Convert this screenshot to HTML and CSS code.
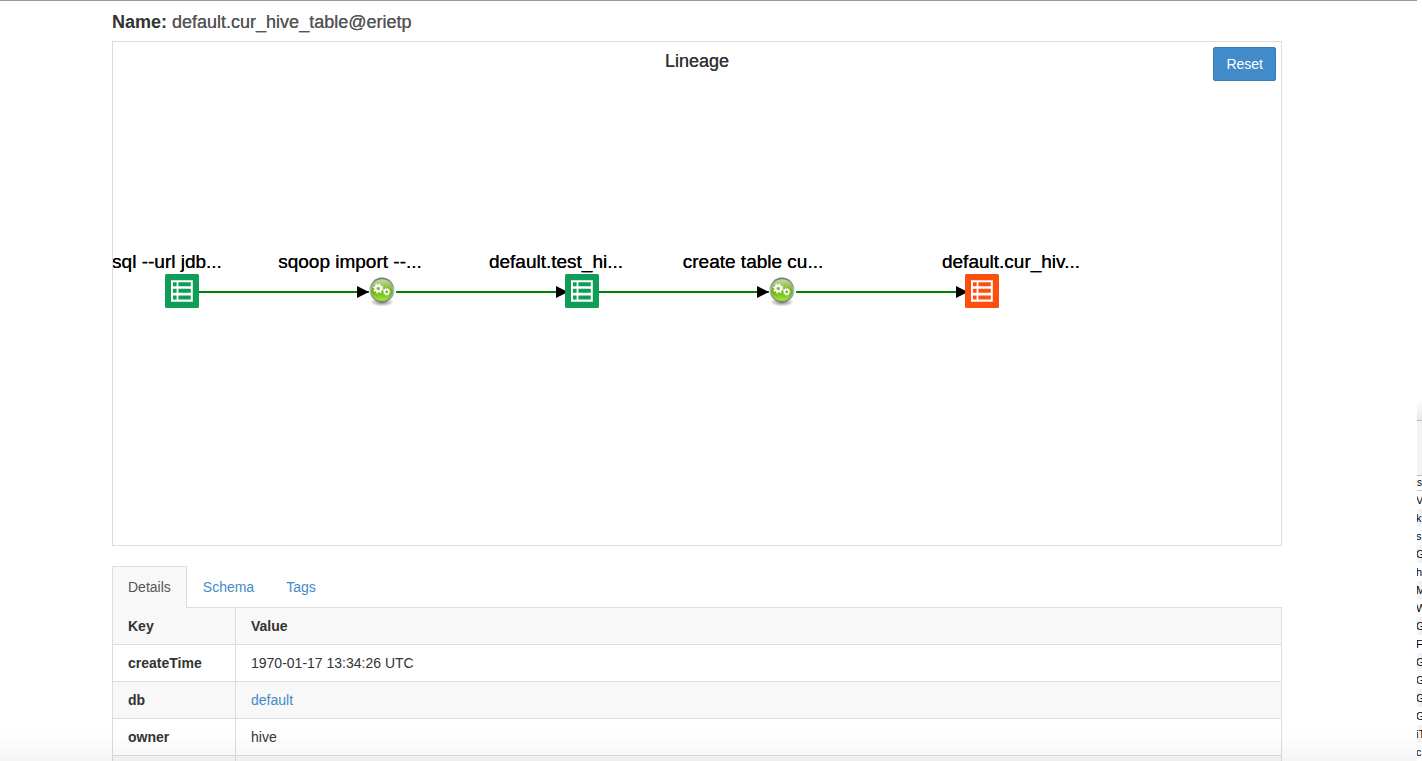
FILE: index.html
```html
<!DOCTYPE html>
<html lang="en">
<head>
<meta charset="utf-8">
<title>default.cur_hive_table@erietp</title>
<link rel="stylesheet" href="styles.css">
</head>
<body>
<div class="desktop">
  <div class="browser">
    <main class="container">
      <h1 class="entity"><b>Name:</b> <span>default.cur_hive_table@erietp</span></h1>

      <section class="lineage">
        <h2 class="lineage-title">Lineage</h2>
        <button type="button" class="reset">Reset</button>
        <svg class="graph" role="img" aria-label="Lineage graph">
          <defs>
            <marker id="arrow" viewBox="0 0 12 12" refX="12" refY="6" markerWidth="12" markerHeight="12" markerUnits="userSpaceOnUse" orient="auto"><path d="M0 0 12 6 0 12Z"/></marker>
            <linearGradient id="rim" x1="0" y1="0" x2="0" y2="1"><stop offset="0" stop-color="#74746f"/><stop offset=".5" stop-color="#b9bcb6"/><stop offset="1" stop-color="#777d70"/></linearGradient>
            <linearGradient id="ball" x1="0" y1="0" x2="0" y2="1"><stop offset="0" stop-color="#c5df9c"/><stop offset=".45" stop-color="#80b93c"/><stop offset=".55" stop-color="#62ab16"/><stop offset="1" stop-color="#a1ec35"/></linearGradient>
            <radialGradient id="shade"><stop offset="0" stop-color="#777"/><stop offset="1" stop-color="#777" stop-opacity="0"/></radialGradient>
            <g id="table">
              <rect width="34" height="34" rx="1.5"/>
              <path fill="#fff" fill-rule="evenodd" d="M6 6.3h21.8v21.4H6zM8 8.3v3.9h3.6V8.3zM13.4 8.3v3.9h12.4V8.3zM8 14.8v3.9h3.6v-3.9zM13.4 14.8v3.9h12.4v-3.9zM8 21.4v4h3.6v-4zM13.4 21.4v4h12.4v-4z"/>
            </g>
            <g id="process">
              <ellipse cx="0" cy="12" rx="12" ry="4.5" fill="url(#shade)"/>
              <circle r="12.5" fill="url(#rim)"/>
              <circle r="10.8" fill="url(#ball)"/>
              <g fill="none" stroke="#fff">
                <circle cx="-3.7" cy="-1.5" r="2.8" stroke-width="2"/>
                <circle cx="-3.7" cy="-1.5" r="4.4" stroke-width="1.5" stroke-dasharray="1.73 1.73"/>
                <circle cx="4.7" cy="1.8" r="2.2" stroke-width="1.6"/>
                <circle cx="4.7" cy="1.8" r="3.3" stroke-width="1" stroke-dasharray="1.3 1.3"/>
              </g>
            </g>
          </defs>
          <g class="edges">
            <path d="M86 250H256"/>
            <path d="M283 250H455"/>
            <path d="M486 250H656"/>
            <path d="M683 250H855"/>
          </g>
          <use href="#table" x="52" y="232" class="source"/>
          <use href="#process" x="269" y="248"/>
          <use href="#table" x="452" y="232" class="source"/>
          <use href="#process" x="669" y="248"/>
          <use href="#table" x="852" y="232" class="current"/>
          <g class="labels">
            <text x="54" y="226">sql --url jdb...</text>
            <text x="237" y="226">sqoop import --...</text>
            <text x="443" y="226">default.test_hi...</text>
            <text x="640" y="226">create table cu...</text>
            <text x="898" y="226">default.cur_hiv...</text>
          </g>
        </svg>
      </section>

      <nav class="tabs">
        <a href="#details" class="tab active">Details</a>
        <a href="#schema" class="tab">Schema</a>
        <a href="#tags" class="tab">Tags</a>
      </nav>
      <table class="details" id="details">
        <thead><tr><th scope="col" class="key">Key</th><th scope="col">Value</th></tr></thead>
        <tbody>
          <tr><th scope="row">createTime</th><td>1970-01-17 13:34:26 UTC</td></tr>
          <tr><th scope="row">db</th><td><a href="#default">default</a></td></tr>
          <tr><th scope="row">owner</th><td>hive</td></tr>
          <tr><th scope="row">&nbsp;</th><td></td></tr>
        </tbody>
      </table>
    </main>
  </div>
  <aside class="behind">
    <div class="behind-shadow"></div>
    <div class="behind-toolbar"></div>
    <div class="behind-head">s</div>
    <ul class="behind-list">
      <li>V</li><li>k</li><li>s</li><li>G</li><li>h</li><li>M</li><li>W</li><li>G</li><li>F</li><li>G</li><li>G</li><li>G</li><li>G</li><li>iT</li><li>c</li>
    </ul>
  </aside>
  <div class="bottom-shade"></div>
</div>
</body>
</html>
```
FILE: styles.css
```css
* { box-sizing: border-box; }

body {
  margin: 0;
  background: #fff;
  color: #333;
  font: 14px/20px "Liberation Sans", Arial, sans-serif;
}

a { color: #428bca; text-decoration: none; }

.desktop {
  position: relative;
  display: flex;
  height: 100vh;
  overflow: hidden;
}

.browser {
  flex: 1;
  min-width: 0;
  padding-right: 23px;
  border-top: 1px solid #999;
}

.container { max-width: 1170px; margin: 0 auto; }

.entity {
  margin: 0;
  padding: 11px 0 9px;
  font-size: 18px;
  line-height: 20px;
  font-weight: 500;
}
.entity span { color: #555; text-shadow: 0 0 #555; }

.lineage {
  position: relative;
  border: 1px solid #ddd;
  margin-bottom: 20px;
}
.lineage-title {
  position: absolute;
  top: 9px;
  left: 0;
  right: 0;
  margin: 0;
  text-align: center;
  font-size: 18px;
  line-height: 20px;
  font-weight: 500;
  text-shadow: 0 0 #333;
}
.reset {
  position: absolute;
  top: 5px;
  right: 5px;
  height: 34px;
  padding: 0 12px;
  border: 1px solid #357ebd;
  border-radius: 2px;
  background: #428bca;
  color: #fff;
  font: inherit;
}
.graph { display: block; width: 100%; height: 503px; overflow: hidden; }
.edges { fill: none; stroke: #008000; stroke-width: 2; }
.edges path { marker-end: url(#arrow); }
.source { fill: #0f9d58; }
.current { fill: #fc4f10; }
.labels { fill: #000; font-size: 19px; text-anchor: middle; text-shadow: 0 0 #000; }

.tabs { display: flex; }
.tab {
  padding: 10px 15px;
  border: 1px solid transparent;
  border-bottom: 0;
}
.tab.active {
  position: relative;
  margin-bottom: -1px;
  padding-bottom: 11px;
  border-color: #ddd;
  background: #f8f8f8;
  color: #555;
}

.details { width: 100%; border-collapse: collapse; }
.details th, .details td {
  border: 1px solid #ddd;
  padding: 8px 15px;
  text-align: left;
}
.details .key { width: 123px; }
.details thead tr, .details tbody tr:nth-child(even) { background: #f8f8f8; }

.behind {
  flex: none;
  width: 5px;
  overflow: hidden;
  display: flex;
  flex-direction: column;
  justify-content: flex-end;
  color: #000;
  font-size: 11px;
}
.behind-shadow { height: 21px; background: linear-gradient(#fff, #e8e8e8); border-bottom: 1px solid #bbb; }
.behind-toolbar { height: 55px; background: #f4f4f4; border-bottom: 1px solid #bbb; }
.behind-head { height: 15px; border-bottom: 1px solid #ccc; font-size: 10px; line-height: 14px; }
.behind-list { margin: 0; padding: 0; list-style: none; }
.behind-list li { height: 18px; line-height: 18px; margin-left: -1px; }
.behind-list li:nth-child(even) { background: #f3f3f3; }

.bottom-shade {
  position: absolute;
  left: 0;
  right: 5px;
  bottom: 0;
  height: 30px;
  background: linear-gradient(rgba(0, 0, 0, 0), rgba(0, 0, 0, .04));
  pointer-events: none;
}
```
